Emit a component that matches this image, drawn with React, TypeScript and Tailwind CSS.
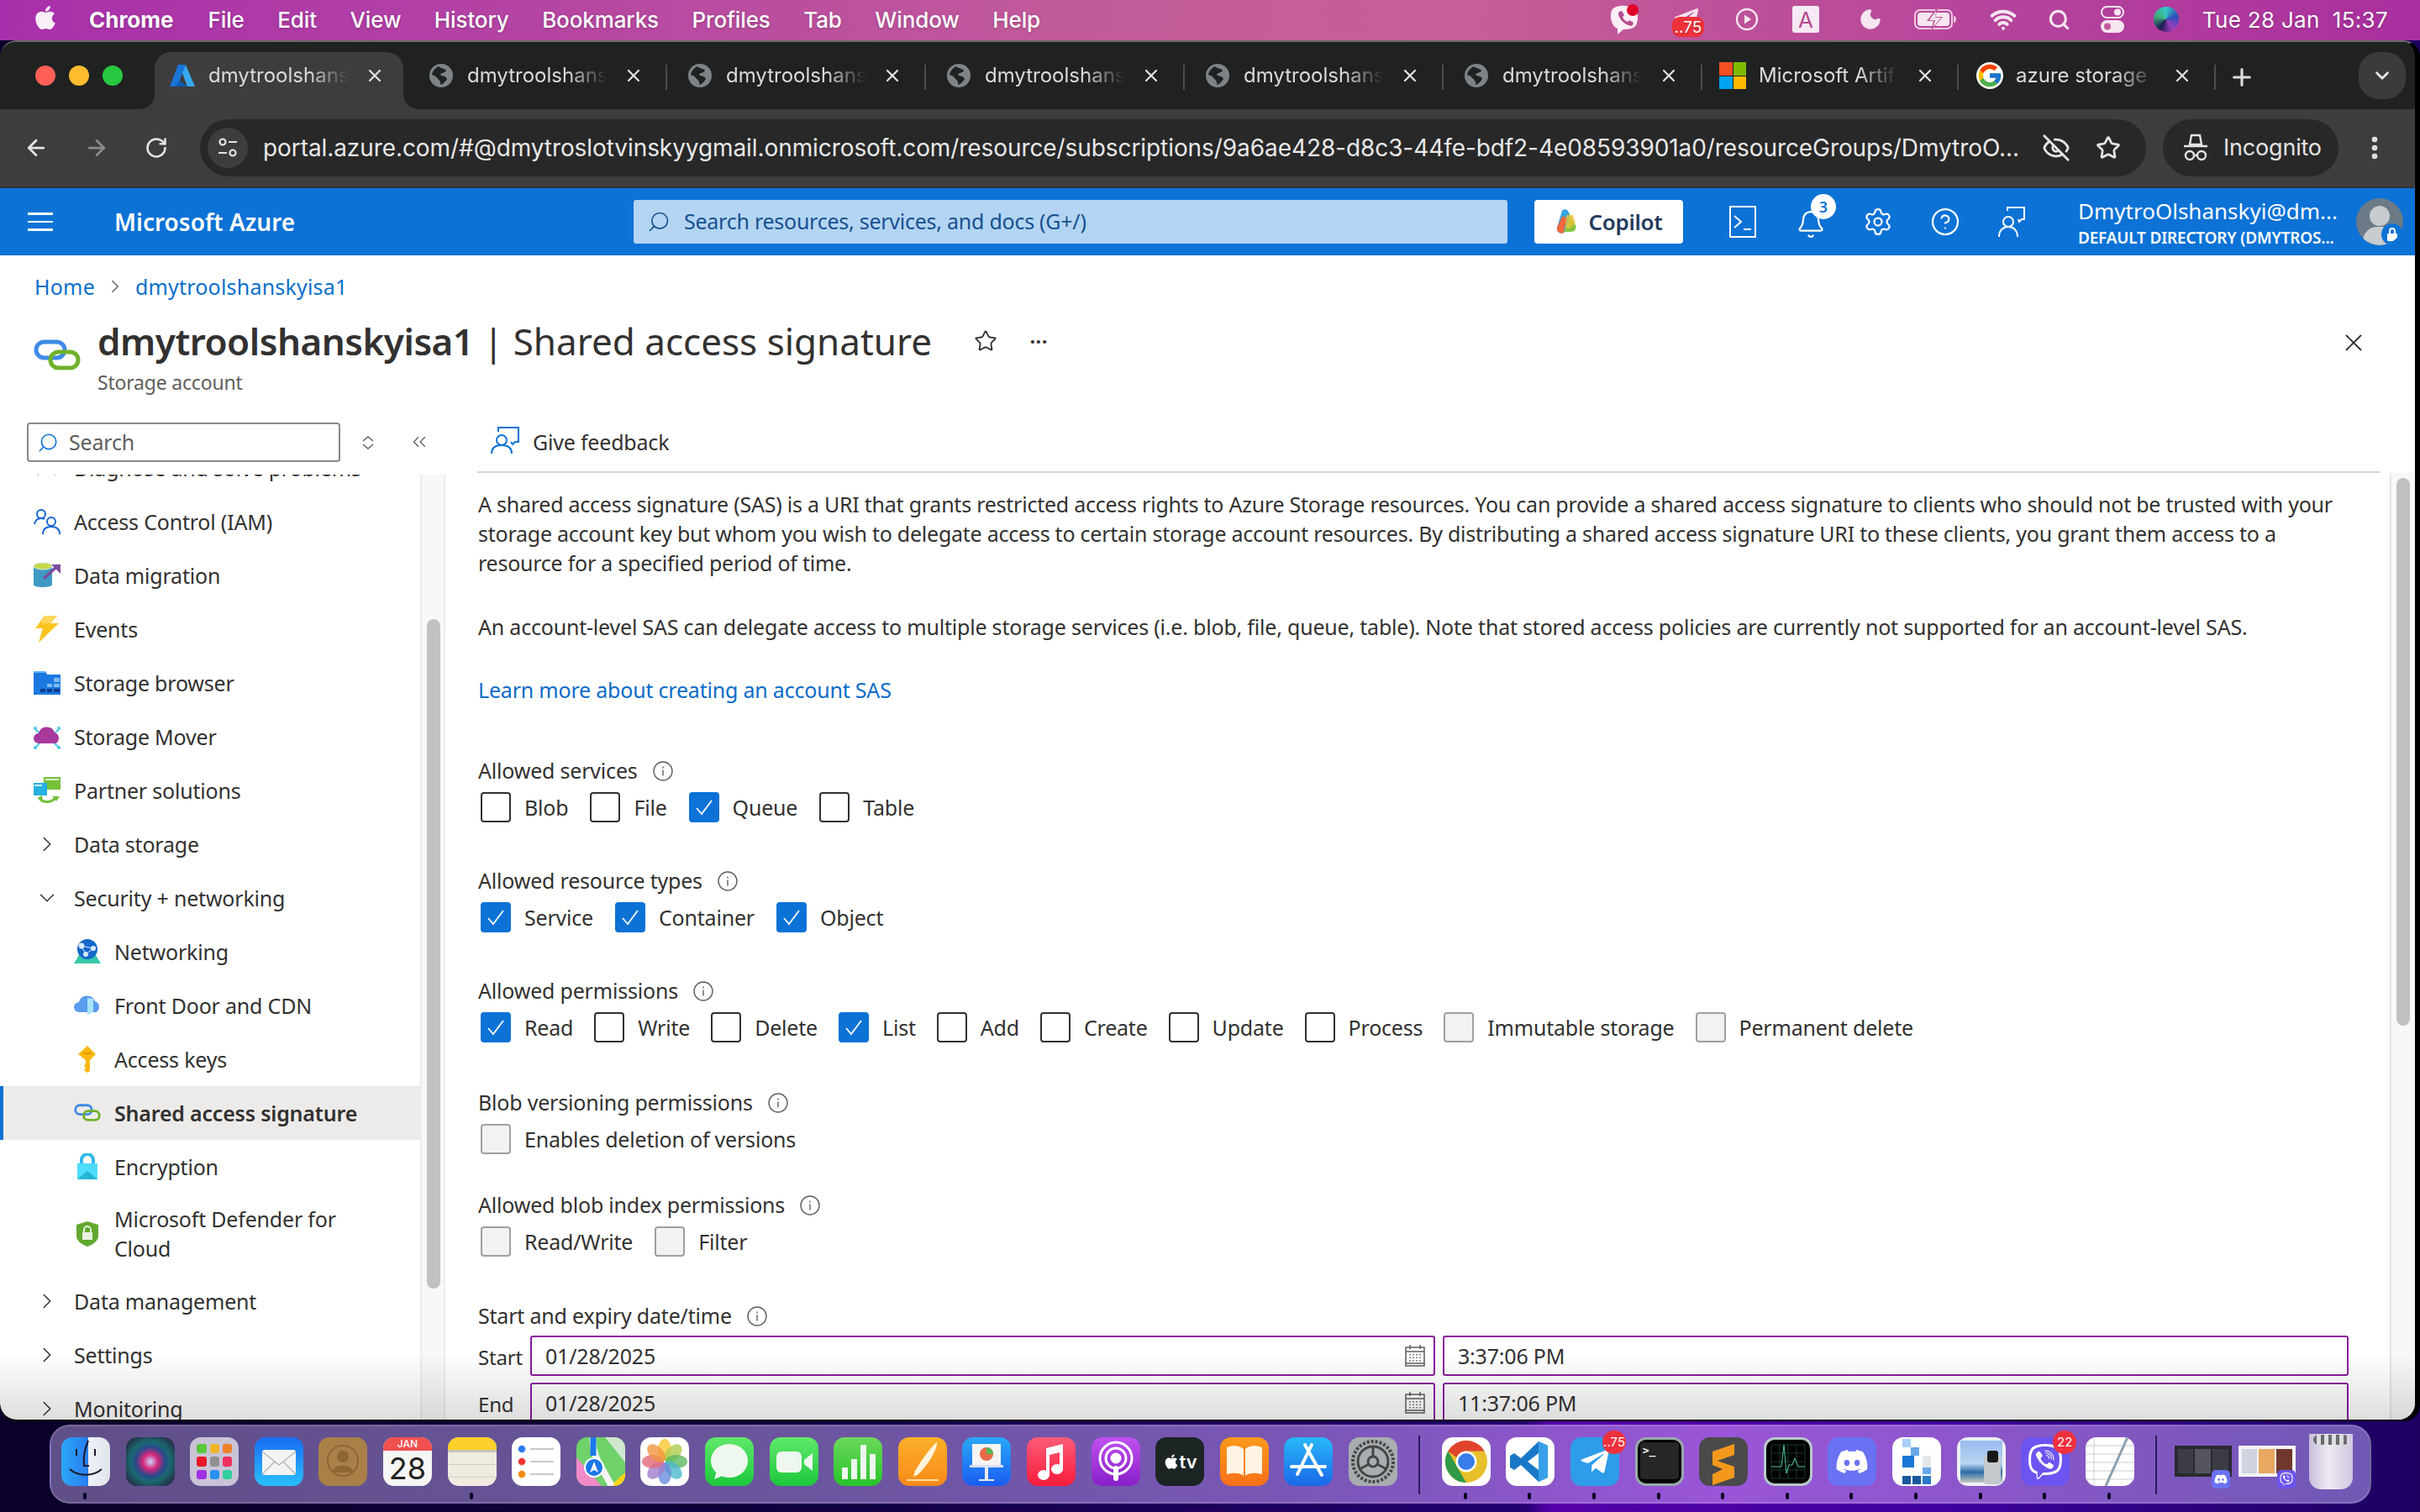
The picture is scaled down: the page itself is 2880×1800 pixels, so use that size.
import type { ReactNode } from 'react';
import {
  ArrowLeft,
  ArrowRight,
  Bell,
  ChevronDown,
  ChevronRight,
  ChevronsLeft,
  CircleHelp,
  EllipsisVertical,
  EyeOff,
  Moon,
  Plus,
  RotateCw,
  Search,
  Settings,
  Star,
  Wifi,
  X,
} from 'lucide-react';
import { FaApple, FaDiscord, FaTelegramPlane, FaViber } from 'react-icons/fa';
import { FcGoogle } from 'react-icons/fc';

function GlobeIcon() {
  return (
    <svg width="30" height="30" viewBox="0 0 30 30">
      <circle cx="15" cy="15" r="14" fill="#7f8388" />
      <path d="M12 4c3 3 7 2 9 5-1 3-6 2-7 5 2 2 7 1 8 5-2 3-4 6-8 7 1-3-1-6-4-8-1-3-4-3-6-4 1-5 4-8 8-10z" fill="#202222" />
    </svg>
  );
}

function AzureLogo() {
  return (
    <svg width="32" height="32" viewBox="0 0 32 32">
      <path d="M11 3h9L10 29H1z" fill="#1a75d8" />
      <path d="M20 3l11 26h-9l-6-16z" fill="#38a8f0" />
      <path d="M13 22l9 7H7z" fill="#0d5cb5" />
    </svg>
  );
}

function MsLogo() {
  return (
    <div className="grid h-[32px] w-[32px] grid-cols-2 gap-px">
      <div className="bg-[#f25022]" />
      <div className="bg-[#7fba00]" />
      <div className="bg-[#00a4ef]" />
      <div className="bg-[#ffb900]" />
    </div>
  );
}

function Tab({ icon, label, active, sep = true, className = '' }: { icon: ReactNode; label: string; active?: boolean; sep?: boolean; className?: string }) {
  return (
    <div className={`relative flex h-[68px] w-[308px] shrink-0 items-center pb-[12px] ${className}`}>
      {active && (
        <>
          <div className="absolute inset-y-0 left-[4px] right-[8px] rounded-t-[20px] bg-[#3d3d3d]" />
          <svg className="absolute bottom-0 left-[-14px]" width="18" height="18" viewBox="0 0 18 18">
            <path d="M18 0v18H0c10 0 18-8 18-18z" fill="#3d3d3d" />
          </svg>
          <svg className="absolute bottom-0 right-[-10px]" width="18" height="18" viewBox="0 0 18 18">
            <path d="M0 0v18h18C8 18 0 10 0 0z" fill="#3d3d3d" />
          </svg>
        </>
      )}
      <div className="relative ml-[20px] flex w-[34px] justify-center">{icon}</div>
      <span className="relative ml-[14px] w-[166px] whitespace-nowrap text-[24px] text-[#d9dadb] [mask-image:linear-gradient(to_right,black_72%,transparent_100%)]">
        {label}
      </span>
      <X className="relative ml-[20px] text-[#e3e3e3]" size={24} strokeWidth={2.2} />
      {sep && <div className="absolute right-[2px] top-[15px] h-[30px] w-[2px] bg-[#4b4d4d]" />}
    </div>
  );
}

function MenuBar() {
  const items = ['File', 'Edit', 'View', 'History', 'Bookmarks', 'Profiles', 'Tab', 'Window', 'Help'];
  return (
    <div className="flex h-[48px] shrink-0 items-center bg-[linear-gradient(90deg,#a82fab_0%,#c25b9a_45%,#c65f97_60%,#a92f9f_100%)] pb-[2px] text-[26px] font-medium text-white [text-shadow:0_1px_3px_rgba(0,0,0,0.25)]">
      <FaApple className="mb-[4px] ml-[38px] text-[#f8eef8]" size={32} />
      <span className="ml-[36px] font-bold">Chrome</span>
      <div className="ml-[41px] flex gap-[39.5px] tracking-[-0.12px]">
        {items.map((m) => (
          <span key={m}>{m}</span>
        ))}
      </div>
      <div className="ml-auto flex items-center">
        {/* viber */}
        <svg width="36" height="38" viewBox="0 0 36 38">
          <path d="M4 7c4-5 18-6 26-1 5 4 5 15 2 20-2 4-9 5-15 5l-7 6v-7c-8-3-10-17-6-23z" fill="#fbeef5" />
          <path d="M12 10l3-1 3 5-2 2c1 3 3 5 6 6l2-2 5 3-1 3c-1 1-3 1-5 0-6-2-11-8-12-13 0-1 0-2 1-3z" fill="#b44b8e" />
          <circle cx="28" cy="8" r="7" fill="#e0002a" />
        </svg>
        {/* telegram with badge */}
        <div className="relative ml-[40px] h-[34px] w-[36px]">
          <FaTelegramPlane className="text-[#f6e2ee]" size={32} />
          <div className="absolute bottom-[-4px] left-[-1px] flex h-[24px] w-[38px] items-center justify-center rounded-[9px] bg-[#ef3239] text-[19px] font-normal leading-none">..75</div>
        </div>
        <svg className="ml-[38px]" width="28" height="28" viewBox="0 0 28 28">
          <circle cx="14" cy="14" r="12" fill="none" stroke="#f6e6f0" strokeWidth="2.4" />
          <path d="M11 8.5l8 5.5-8 5.5z" fill="#f6e6f0" />
        </svg>
        <div className="ml-[40px] flex h-[32px] w-[32px] items-center justify-center rounded-[3px] bg-[#f7e9f3] text-[26px] font-normal text-[#b44b8e] [text-shadow:none]">A</div>
        <Moon className="ml-[47px] text-[#f6e6f0]" fill="#f6e6f0" size={28} />
        <svg className="ml-[38px]" width="52" height="28" viewBox="0 0 52 28">
          <rect x="1" y="3" width="44" height="22" rx="6" fill="none" stroke="#f0c9e0" strokeWidth="2" />
          <rect x="4" y="6" width="38" height="16" rx="3.5" fill="#f6e6f0" />
          <path d="M47 10v8c2 0 3-2 3-4s-1-4-3-4z" fill="#f0c9e0" />
          <path d="M27 0L15 16h8l-3 12 14-17h-9l4-11z" fill="#c25b9a" />
          <path d="M26 4L18 15h7l-2 8 9-11h-7l1-8z" fill="#f6e6f0" />
        </svg>
        <Wifi className="ml-[38px] text-[#f6e6f0]" size={32} strokeWidth={3} />
        <Search className="ml-[37px] text-[#f6e6f0]" size={27} strokeWidth={2.8} />
        <svg className="ml-[36px]" width="28" height="32" viewBox="0 0 28 32">
          <rect x="1" y="1" width="26" height="13" rx="6.5" fill="none" stroke="#f6e6f0" strokeWidth="2" />
          <circle cx="20" cy="7.5" r="4" fill="#f6e6f0" />
          <rect x="0" y="17" width="28" height="15" rx="7.5" fill="#f6e6f0" />
          <circle cx="8" cy="24.5" r="4" fill="#c25b9a" />
        </svg>
        <div className="ml-[35px] h-[30px] w-[30px] rounded-full bg-[conic-gradient(#37c8c8,#2b4fb8,#9a3fc0,#1d1d50,#3fae7a,#37c8c8)]" />
      </div>
      <span className="ml-[28px] mr-[38px] whitespace-pre font-normal tracking-[0.3px]">Tue 28 Jan  15:37</span>
    </div>
  );
}

function ChromeFrame() {
  const tab = () => <Tab icon={<GlobeIcon />} label="dmytroolshans" />;
  return (
    <>
      <div className="flex h-[80px] shrink-0 items-end bg-[#202222] pl-[42px] font-['Inter',sans-serif]">
        <div className="mb-[28px] mr-[34px] flex gap-[16px]">
          <div className="h-[24px] w-[24px] rounded-full bg-[#ff5f57]" />
          <div className="h-[24px] w-[24px] rounded-full bg-[#febc2e]" />
          <div className="h-[24px] w-[24px] rounded-full bg-[#28c840]" />
        </div>
        <Tab active sep={false} icon={<AzureLogo />} label="dmytroolshans" />
        {tab()}
        {tab()}
        {tab()}
        {tab()}
        {tab()}
        <Tab className="-ml-[3px]" icon={<MsLogo />} label="Microsoft Artif" />
        <Tab className="-ml-[2px]" icon={<FcGoogle className="rounded-full bg-white" size={32} />} label="azure storage" />
        <Plus className="mb-[22px] ml-[13px] text-[#dcdcdc]" size={32} strokeWidth={2.4} />
        <div className="mb-[12px] ml-[123px] flex h-[56px] w-[56px] items-center justify-center rounded-[24px] bg-[#3a3b3b]">
          <ChevronDown className="text-[#e3e3e3]" size={26} strokeWidth={2.6} />
        </div>
      </div>
      <div className="flex h-[94px] shrink-0 items-center border-b-2 border-[#333] bg-[#3d3d3d] font-['Inter',sans-serif] text-[#e3e3e3]">
        <ArrowLeft className="ml-[28px]" size={30} strokeWidth={2.2} />
        <ArrowRight className="ml-[42px] text-[#8c8c8c]" size={30} strokeWidth={2.2} />
        <RotateCw className="ml-[42px]" size={28} strokeWidth={2.2} />
        <div className="ml-[38px] flex h-[68px] w-[2316px] items-center rounded-[34px] bg-[#282828]">
          <div className="ml-[9px] flex h-[48px] w-[48px] items-center justify-center rounded-full bg-[#3d3d3d]">
            <svg width="26" height="26" viewBox="0 0 26 26" fill="none" stroke="#e3e3e3" strokeWidth="2.2">
              <circle cx="7" cy="6" r="3.5" />
              <path d="M14 6h10M2 19h10" />
              <circle cx="19" cy="19" r="3.5" />
            </svg>
          </div>
          <span className="ml-[18px] whitespace-nowrap text-[28px] tracking-[-0.08px] text-[#e9e9e9]">portal.azure.com/#@dmytroslotvinskyygmail.onmicrosoft.com/resource/subscriptions/9a6ae428-d8c3-44fe-bdf2-4e08593901a0/resourceGroups/DmytroO...</span>
          <EyeOff className="ml-auto" size={34} strokeWidth={2} />
          <Star className="ml-[30px] mr-[30px]" size={30} strokeWidth={2.2} />
        </div>
        <div className="ml-[20px] flex h-[68px] w-[209px] items-center rounded-[34px] bg-[#282828]">
          <svg className="ml-[24px]" width="30" height="34" viewBox="0 0 30 34" fill="none" stroke="#e3e3e3" strokeWidth="2.4">
            <path d="M10 2h10l2 11H8zM1 15h28" />
            <circle cx="8" cy="26" r="5" />
            <circle cx="22" cy="26" r="5" />
            <path d="M13 26h4" />
          </svg>
          <span className="ml-[18px] text-[27px] tracking-[-0.2px]">Incognito</span>
        </div>
        <EllipsisVertical className="ml-[26px]" size={34} strokeWidth={2.6} />
      </div>
    </>
  );
}

function AzureHeader() {
  return (
    <div className="flex h-[80px] shrink-0 items-center bg-[#0c72d6] font-['Noto_Sans',sans-serif] text-white">
      <div className="ml-[33px] flex w-[30px] flex-col gap-[7px]">
        <div className="h-[2.5px] bg-white" />
        <div className="h-[2.5px] bg-white" />
        <div className="h-[2.5px] bg-white" />
      </div>
      <span className="ml-[73px] w-[618px] text-[28px] font-semibold">Microsoft Azure</span>
      <div className="flex h-[52px] w-[1040px] items-center rounded-[3px] bg-[#b3d5f3] pl-[16px] text-[25px] tracking-[-0.25px] text-[#17508f]">
        <Search className="scale-x-[-1]" size={28} strokeWidth={1.4} />
        <span className="ml-[16px]">Search resources, services, and docs (G+/)</span>
      </div>
      <div className="ml-[32px] flex h-[52px] w-[177px] items-center justify-center gap-[12px] rounded-[4px] bg-white text-[26px] font-semibold tracking-[-0.3px] text-[#243a5e]">
        <svg width="28" height="32" viewBox="0 0 28 32">
          <path d="M9 3c2-3 7-2 8 2l5 15-11 9c-4 2-9-1-8-6z" fill="#37a5e8" />
          <path d="M3 23l6-13c3-1 5 0 6 3l-3 9-1 7c-4 2-9-1-8-6z" fill="#f2683c" />
          <path d="M17 5l8 15c2 4-1 8-5 8h-9l6-13z" fill="#86c440" />
          <path d="M14 8h8l3 9-7 7h-5z" fill="#f0c436" opacity=".75" />
        </svg>
        Copilot
      </div>
      <svg className="ml-[54px]" width="34" height="38" viewBox="0 0 34 38" fill="none" stroke="#fff" strokeWidth="2">
        <rect x="2" y="1" width="30" height="36" />
        <path d="M7 12l8 7-8 7M18 28h9" />
      </svg>
      <div className="relative ml-[46px]">
        <Bell size={36} strokeWidth={1.5} className="mt-[6px]" />
        <div className="absolute right-[-12px] top-[-12px] flex h-[30px] w-[30px] items-center justify-center rounded-full bg-white text-[18px] font-semibold text-[#0c72d6]">3</div>
      </div>
      <Settings className="ml-[44px]" size={36} strokeWidth={1.5} />
      <CircleHelp className="ml-[44px]" size={36} strokeWidth={1.5} />
      <svg className="ml-[44px]" width="34" height="38" viewBox="0 0 34 38" fill="none" stroke="#fff" strokeWidth="2">
        <path d="M12 6V2h20v14h-3l-3 3-1-3" />
        <circle cx="13" cy="19" r="6" />
        <path d="M2 37c0-8 5-12 11-12s11 4 11 12" />
      </svg>
      <div className="ml-[62px] flex w-[320px] flex-col">
        <span className="mt-[1px] whitespace-nowrap text-[26px] leading-[34px]">DmytroOlshanskyi@dm...</span>
        <span className="mt-[2px] whitespace-nowrap text-[19px] font-semibold leading-[26px] tracking-[-0.2px]">DEFAULT DIRECTORY (DMYTROS...</span>
      </div>
      <div className="relative ml-[11px] h-[56px] w-[56px] overflow-hidden rounded-full bg-[#6b7a86]">
        <div className="absolute left-[16px] top-[9px] h-[24px] w-[24px] rounded-full bg-[#c8ccd0]" />
        <div className="absolute left-[8px] top-[34px] h-[34px] w-[40px] rounded-full bg-[#c8ccd0]" />
        <div className="absolute bottom-[0px] right-[0px] flex h-[26px] w-[26px] items-center justify-center rounded-full bg-[#0c72d6]">
          <svg width="14" height="16" viewBox="0 0 14 16">
            <path d="M4 7V4a3 3 0 016 0v3" fill="none" stroke="#fff" strokeWidth="2" />
            <rect x="1" y="7" width="12" height="9" rx="1" fill="#fff" />
          </svg>
        </div>
      </div>
    </div>
  );
}

function ChainIcon({ w = 32 }: { w?: number }) {
  return (
    <svg width={w} height={(w * 37) / 56} viewBox="0 0 56 37" fill="none" strokeWidth="5">
      <rect x="3" y="3" width="34" height="19" rx="9.5" stroke="#3f8ae6" />
      <rect x="20" y="15" width="33" height="19" rx="9.5" stroke="#6fb12a" />
    </svg>
  );
}

const sideIcons: Record<string, ReactNode> = {
  diagnose: (
    <svg width="32" height="32" viewBox="0 0 32 32">
      <path d="M2 20l9-7 3 4-9 8z" fill="#1c6fb8" />
      <path d="M18 13l12 7-4 5-9-7z" fill="#4aa8c8" />
    </svg>
  ),
  iam: (
    <svg width="32" height="32" viewBox="0 0 32 32" fill="none" stroke="#1467d8" strokeWidth="2">
      <circle cx="9" cy="7" r="5" />
      <path d="M1 19c1-5 4-7 8-7 2 0 3 .5 4 1" />
      <circle cx="21" cy="16" r="5" />
      <path d="M11 31c0-6 4-9 10-9s10 3 10 9" />
    </svg>
  ),
  migration: (
    <svg width="32" height="32" viewBox="0 0 32 32">
      <path d="M0 5h22v22c0 2-5 3-11 3S0 29 0 27z" fill="#3f9ac2" />
      <ellipse cx="11" cy="5" rx="11" ry="4" fill="#c8d84a" stroke="#d8e8e8" />
      <path d="M12 20L27 6" stroke="#7a4b9e" strokeWidth="3.5" />
      <path d="M21 3h11v11z" fill="#7a4b9e" />
    </svg>
  ),
  events: (
    <svg width="32" height="32" viewBox="0 0 32 32">
      <path d="M13 0h15l-8 9h10L6 32l5-17H2z" fill="#fcc41e" />
      <path d="M13 0h15l-8 9H9z" fill="#fdd85a" />
    </svg>
  ),
  browser: (
    <svg width="32" height="32" viewBox="0 0 32 32">
      <path d="M0 2h14l2 4h16v24H0z" fill="#1a78e0" />
      <path d="M0 2h14l1 2H0z" fill="#60b0f8" />
      <g fill="#0b3c8c">
        <rect x="8" y="23" width="6" height="4" />
        <rect x="16" y="23" width="6" height="4" />
        <rect x="24" y="23" width="7" height="4" />
      </g>
      <g fill="#7fb8f0">
        <rect x="16" y="17" width="6" height="4" />
        <rect x="24" y="17" width="7" height="4" />
        <rect x="24" y="10" width="7" height="5" />
      </g>
    </svg>
  ),
  mover: (
    <svg width="32" height="32" viewBox="0 0 32 32">
      <path d="M2 7l6 6M30 7l-6 6M2 29l6-6M30 29l-6-6" stroke="#4cc8e8" strokeWidth="2" />
      <path d="M6 24a6 6 0 010-12 10 10 0 0119-1 7 7 0 011 13z" fill="#a8389c" />
      <circle cx="2" cy="6" r="2" fill="#4cc8e8" />
      <circle cx="30" cy="6" r="2" fill="#4cc8e8" />
      <circle cx="2" cy="29" r="2" fill="#4cc8e8" />
      <circle cx="30" cy="29" r="2" fill="#4cc8e8" />
    </svg>
  ),
  partner: (
    <svg width="32" height="32" viewBox="0 0 32 32">
      <rect x="12" y="0" width="20" height="15" fill="#76c03a" />
      <rect x="14" y="2" width="16" height="2" fill="#dff0c8" />
      <rect x="0" y="7" width="16" height="15" fill="#28b0e0" />
      <rect x="1" y="9" width="9" height="2" fill="#c8f0ff" />
      <path d="M7 25c3 6 14 6 19 0" fill="none" stroke="#76c03a" strokeWidth="3" />
      <path d="M22 23h9l-4 6zM4 25l6-3 1 6z" fill="#76c03a" />
    </svg>
  ),
  networking: (
    <svg width="32" height="32" viewBox="0 0 32 32">
      <path d="M0 30l6-10h20l6 10z" fill="#36c8a8" />
      <circle cx="16" cy="13" r="12" fill="#1468c8" />
      <circle cx="9" cy="9" r="3.4" fill="#d8eaff" />
      <circle cx="23" cy="12" r="3" fill="#d8eaff" />
      <circle cx="14" cy="19" r="3" fill="#d8eaff" />
      <path d="M9 9l14 3-9 7z" fill="none" stroke="#d8eaff" />
    </svg>
  ),
  frontdoor: (
    <svg width="32" height="32" viewBox="0 0 32 32">
      <path d="M6 24a6 6 0 010-12 10 10 0 0119-1 7 7 0 011 13z" fill="#5a9cf0" />
      <path d="M17 7l-1 1v20l7-5V8z" fill="#a8e4f8" />
    </svg>
  ),
  key: (
    <svg width="32" height="32" viewBox="0 0 32 32">
      <path d="M16 0l10 10-7 7v13l-3 2-4-3 2-3-2-2 2-3v-4L5 10z" fill="#fbb80f" />
      <rect x="11" y="8" width="10" height="2" fill="#e89a00" />
    </svg>
  ),
  encryption: (
    <svg width="32" height="32" viewBox="0 0 32 32">
      <path d="M9 14V8a7 7 0 0114 0v6" fill="none" stroke="#32b8ea" strokeWidth="4" />
      <rect x="4" y="12" width="24" height="19" fill="#4fdcfb" />
      <path d="M4 31l12-10 12 10z" fill="#24b4d8" />
    </svg>
  ),
  defender: (
    <svg width="28" height="32" viewBox="0 0 28 32">
      <path d="M14 1l13 4v14c0 5-7 10-13 12C8 29 1 24 1 19V5z" fill="#62a82e" />
      <path d="M10 14v-3a4 4 0 018 0v3" fill="none" stroke="#e8f0e0" strokeWidth="2" />
      <rect x="8" y="14" width="12" height="9" fill="#e8f0e0" />
    </svg>
  ),
};

function SideRow({ icon, label, sub, open, chev, active, wrap, className = '' }: { icon?: ReactNode; label: string; sub?: boolean; open?: boolean; chev?: boolean; active?: boolean; wrap?: boolean; className?: string }) {
  return (
    <div className={`flex min-h-[64px] items-center ${sub ? 'pl-[88px]' : 'pl-[40px]'} ${active ? 'border-l-4 border-[#0c72d6] !pl-[84px] bg-[#edebe9] font-semibold' : ''} ${className}`}>
      <div className="flex w-[32px] shrink-0 justify-center">
        {chev && (open ? <ChevronDown size={30} strokeWidth={1.2} /> : <ChevronRight size={30} strokeWidth={1.2} />)}
        {icon}
      </div>
      <span className={`ml-[16px] leading-[35px] ${wrap ? 'max-w-[300px]' : 'whitespace-nowrap'}`}>{label}</span>
    </div>
  );
}

function Sidebar() {
  return (
    <div className="flex w-[530px] shrink-0 flex-col">
      <div className="flex h-[64px] shrink-0 items-start pl-[32px] pt-[2px]">
        <div className="flex h-[47px] w-[373px] items-center rounded-[4px] border-2 border-[#8a8886] pl-[10px] text-[#605e5c]">
          <Search className="scale-x-[-1] text-[#0c72d6]" size={26} strokeWidth={1.5} />
          <span className="ml-[12px]">Search</span>
        </div>
        <svg className="ml-[25px] mt-[15px]" width="16" height="18" viewBox="0 0 16 18" fill="none" stroke="#605e5c" strokeWidth="1.4">
          <path d="M2 7l6-5 6 5M2 11l6 5 6-5" />
        </svg>
        <ChevronsLeft className="ml-[40px] mt-[10px] text-[#605e5c]" size={26} strokeWidth={1.2} />
      </div>
      <div className="flex min-h-0 flex-1">
        <div className="w-[500px] shrink-0 overflow-hidden">
          <SideRow className="-mt-[40px]" icon={sideIcons.diagnose} label="Diagnose and solve problems" />
          <SideRow icon={sideIcons.iam} label="Access Control (IAM)" />
          <SideRow icon={sideIcons.migration} label="Data migration" />
          <SideRow icon={sideIcons.events} label="Events" />
          <SideRow icon={sideIcons.browser} label="Storage browser" />
          <SideRow icon={sideIcons.mover} label="Storage Mover" />
          <SideRow icon={sideIcons.partner} label="Partner solutions" />
          <SideRow chev label="Data storage" />
          <SideRow chev open label="Security + networking" />
          <SideRow sub icon={sideIcons.networking} label="Networking" />
          <SideRow sub icon={sideIcons.frontdoor} label="Front Door and CDN" />
          <SideRow sub icon={sideIcons.key} label="Access keys" />
          <SideRow sub active icon={<ChainIcon />} label="Shared access signature" />
          <SideRow sub icon={sideIcons.encryption} label="Encryption" />
          <SideRow sub wrap className="py-[13px]" icon={sideIcons.defender} label="Microsoft Defender for Cloud" />
          <SideRow chev label="Data management" />
          <SideRow chev label="Settings" />
          <SideRow chev label="Monitoring" />
        </div>
        <div className="w-[30px] border-x-2 border-[#ececec] bg-[#f8f8f8] pl-[6px] pt-[172px]">
          <div className="h-[797px] w-[16px] rounded-full bg-[#c1c1c1]" />
        </div>
      </div>
    </div>
  );
}

function Info() {
  return (
    <svg className="ml-[18px]" width="24" height="24" viewBox="0 0 24 24" fill="none" stroke="#605e5c" strokeWidth="1.4">
      <circle cx="12" cy="12" r="11" />
      <path d="M12 10.5v7M12 6.5v2" />
    </svg>
  );
}

function Check({ label, on, off, tight }: { label: string; on?: boolean; off?: boolean; tight?: boolean }) {
  return (
    <div className={`${tight ? 'mr-[25px]' : 'mr-[26px]'} flex items-center`}>
      <div className={`flex h-[36px] w-[36px] items-center justify-center rounded-[4px] border-2 ${on ? 'border-[#0c72d6] bg-[#0c72d6]' : off ? 'border-[#a19f9d] bg-[#f3f2f1]' : 'border-[#323130] bg-white'}`}>
        {on && (
          <svg width="24" height="24" viewBox="0 0 24 24" fill="none" stroke="#fff" strokeWidth="1.8">
            <path d="M3 13l6 7L21 4" />
          </svg>
        )}
      </div>
      <span className="ml-[16px] leading-[35px]">{label}</span>
    </div>
  );
}

function Field({ label, className = '', children }: { label: string; className?: string; children: ReactNode }) {
  return (
    <div className={className}>
      <div className="flex h-[35px] items-center">
        {label}
        <Info />
      </div>
      {children}
    </div>
  );
}

function Calendar() {
  return (
    <svg className="ml-auto mr-[10px]" width="24" height="26" viewBox="0 0 24 26" fill="none" stroke="#605e5c" strokeWidth="1.5">
      <rect x="1" y="3" width="22" height="22" />
      <path d="M1 8h22M1 22h22M6 0v5M18 0v5" />
      <path d="M6 11v9M10 11v9M14 11v9M18 11v9" strokeDasharray="1.5 2" />
    </svg>
  );
}

function DateRow({ label, date, time, mt }: { label: string; date: string; time: string; mt: string }) {
  return (
    <div className={`flex h-[48px] items-center ${mt}`}>
      <span className="w-[62px] pt-[2px] text-[24px]">{label}</span>
      <div className="flex h-[48px] w-[1077px] items-center rounded-[3px] border-2 border-[#8a1aa0] bg-white/40 pl-[16px]">
        {date}
        <Calendar />
      </div>
      <div className="ml-[9px] flex h-[48px] w-[1078px] items-center rounded-[3px] border-2 border-[#8a1aa0] bg-white/40 pl-[16px]">{time}</div>
    </div>
  );
}

function MainPane() {
  return (
    <div className="ml-[38px] flex min-w-0 flex-1 flex-col">
      <div className="mr-[41px] flex h-[62px] shrink-0 items-start border-b-2 border-[#d6d6d6] pl-[16px] pt-[6px]">
        <svg width="34" height="34" viewBox="0 0 34 34" fill="none" stroke="#0c72d6" strokeWidth="2">
          <path d="M9 7V2h24v17h-4l-3 3-2-3" />
          <circle cx="13" cy="17" r="6" />
          <path d="M1 33c0-7 5-10 12-10s12 3 12 10" />
        </svg>
        <span className="ml-[16px] mt-[2px]">Give feedback</span>
      </div>
      <div className="flex min-h-0 flex-1">
        <div className="min-w-0 flex-1 overflow-hidden pl-[1px] pt-[20px]">
          <p className="w-[2240px] tracking-[-0.24px]">A shared access signature (SAS) is a URI that grants restricted access rights to Azure Storage resources. You can provide a shared access signature to clients who should not be trusted with your storage account key but whom you wish to delegate access to certain storage account resources. By distributing a shared access signature URI to these clients, you grant them access to a resource for a specified period of time.</p>
          <p className="mt-[41px]">An account-level SAS can delegate access to multiple storage services (i.e. blob, file, queue, table). Note that stored access policies are currently not supported for an account-level SAS.</p>
          <p className="mt-[40px] text-[#0b6cc8]">Learn more about creating an account SAS</p>
          <Field className="mt-[61px]" label="Allowed services">
            <div className="mt-[8px] flex pl-[3px]">
              <Check label="Blob" />
              <Check label="File" />
              <Check label="Queue" on />
              <Check label="Table" />
            </div>
          </Field>
          <Field className="mt-[52px]" label="Allowed resource types">
            <div className="mt-[8px] flex pl-[3px]">
              <Check label="Service" on />
              <Check label="Container" on />
              <Check label="Object" on />
            </div>
          </Field>
          <Field className="mt-[52px]" label="Allowed permissions">
            <div className="mt-[8px] flex pl-[3px]">
              <Check tight label="Read" on />
              <Check tight label="Write" />
              <Check tight label="Delete" />
              <Check tight label="List" on />
              <Check tight label="Add" />
              <Check tight label="Create" />
              <Check tight label="Update" />
              <Check tight label="Process" />
              <Check tight label="Immutable storage" off />
              <Check tight label="Permanent delete" off />
            </div>
          </Field>
          <Field className="mt-[54px]" label="Blob versioning permissions">
            <div className="mt-[8px] flex pl-[3px]">
              <Check label="Enables deletion of versions" off />
            </div>
          </Field>
          <Field className="mt-[43px]" label="Allowed blob index permissions">
            <div className="mt-[8px] flex pl-[3px]">
              <Check label="Read/Write" off />
              <Check label="Filter" off />
            </div>
          </Field>
          <Field className="mt-[53px]" label="Start and expiry date/time">
            <DateRow mt="mt-[6px]" label="Start" date="01/28/2025" time="3:37:06 PM" />
            <DateRow mt="mt-[8px]" label="End" date="01/28/2025" time="11:37:06 PM" />
          </Field>
        </div>
        <div className="w-[30px] shrink-0 border-l-2 border-[#e6e6e6] bg-[#f8f8f8] pl-[6px] pt-[6px]">
          <div className="h-[652px] w-[16px] rounded-full bg-[#c1c1c1]" />
        </div>
      </div>
    </div>
  );
}

function Portal() {
  return (
    <div className="relative flex min-h-0 flex-1 flex-col overflow-hidden rounded-b-[20px] bg-white font-['Noto_Sans',sans-serif] text-[25px] leading-[35px] tracking-[-0.2px] text-[#323130]">
      <div className="pl-[41px] pt-[20px] text-[#0c6fcb]">
        <div className="flex h-[34px] items-center tracking-[0.2px]">
          Home
          <ChevronRight className="mx-[11px] text-[#605e5c]" size={26} strokeWidth={1.2} />
          dmytroolshanskyisa1
        </div>
      </div>
      <div className="relative flex h-[143px] shrink-0 pl-[40px] pt-[19px]">
        <div className="mt-[27px]">
          <ChainIcon w={56} />
        </div>
        <div className="ml-[20px] flex flex-col">
          <div className="flex items-center">
            <span className="text-[44px] leading-[58px] tracking-normal">
              <span className="font-semibold tracking-[-0.5px]">dmytroolshanskyisa1</span> | Shared access signature
            </span>
            <Star className="ml-[50px] mr-[38px]" size={28} strokeWidth={1.6} />
            <span className="text-[26px] font-semibold leading-none tracking-normal">···</span>
          </div>
          <span className="mt-[4px] text-[23px] leading-[32px] text-[#605e5c]">Storage account</span>
        </div>
        <X className="absolute right-[56px] top-[33px]" size={34} strokeWidth={1.3} />
      </div>
      <div className="flex min-h-0 flex-1">
        <Sidebar />
        <MainPane />
      </div>
      {/* shade cast by the dock */}
      <div className="pointer-events-none absolute inset-x-0 bottom-0 h-[80px] bg-[linear-gradient(180deg,rgba(0,0,0,0)_0%,rgba(0,0,0,0.13)_100%)]" />
    </div>
  );
}

function Squircle({ className = '', children }: { className?: string; children?: ReactNode }) {
  return <div className={`relative h-[58px] w-[58px] shrink-0 overflow-hidden rounded-[13px] ${className}`}>{children}</div>;
}

const leftDock: ReactNode[] = [
  <Squircle key="finder" className="bg-[linear-gradient(90deg,#2aa8f6_0%,#2a7cf0_55%,#eef2f6_55%,#dfe5ec_100%)]">
    <svg width="58" height="58" viewBox="0 0 58 58" fill="none" stroke="#1a1a2a" strokeWidth="2">
      <path d="M18 14v8M40 14v8M32 4c-5 12-6 22-5 30h6M10 38c10 9 28 9 38 0" />
    </svg>
  </Squircle>,
  <Squircle key="siri" className="bg-[radial-gradient(circle,#c8d8ff_0%,#d8267a_22%,#2a4a8c_42%,#1a6a70_58%,#2a1030_100%)]" />,
  <Squircle key="launchpad" className="grid grid-cols-3 gap-[4px] bg-[#c8c4d6] p-[8px]">
    {['bg-[#58c838]', 'bg-[#f0b428]', 'bg-[#f08028]', 'bg-[#e81828]', 'bg-[#909090]', 'bg-[#f03060]', 'bg-[#a030e0]', 'bg-[#2890f0]', 'bg-[#30d0a0]'].map((c) => (
      <div key={c} className={`rounded-[3px] ${c}`} />
    ))}
  </Squircle>,
  <Squircle key="mail" className="bg-[linear-gradient(180deg,#1a6cf4_0%,#28c0fc_100%)]">
    <svg width="58" height="58" viewBox="0 0 58 58">
      <rect x="9" y="15" width="40" height="30" rx="3" fill="#f4f4f4" />
      <path d="M9 17l20 16 20-16M9 44l15-15M49 44L34 29" fill="none" stroke="#b8b8b8" strokeWidth="1.5" />
    </svg>
  </Squircle>,
  <Squircle key="contacts" className="bg-[#a98048]">
    <svg width="58" height="58" viewBox="0 0 58 58" fill="none" stroke="#8c6634" strokeWidth="2">
      <circle cx="29" cy="28" r="18" />
      <circle cx="29" cy="23" r="6" fill="#8c6634" />
      <path d="M17 42c2-10 22-10 24 0" fill="#8c6634" />
    </svg>
  </Squircle>,
  <Squircle key="calendar" className="flex flex-col items-center bg-[#f6f6f4] text-[#222]">
    <div className="flex h-[16px] w-full items-center justify-center bg-[#f05050] text-[12px] font-medium leading-none text-white">JAN</div>
    <span className="mt-[1px] text-[36px] font-normal leading-[40px]">28</span>
  </Squircle>,
  <Squircle key="notes" className="flex flex-col bg-[#efebe0]">
    <div className="h-[15px] bg-[#fdd02c]" />
    <div className="h-[3px] bg-[#c9c5b8]" />
    <div className="mt-[14px] h-px bg-[#d2cfc4]" />
    <div className="mt-[14px] h-px bg-[#d2cfc4]" />
  </Squircle>,
  <Squircle key="reminders" className="bg-white">
    <svg width="58" height="58" viewBox="0 0 58 58" fill="none">
      <circle cx="12" cy="14" r="4.5" fill="#2a78f0" stroke="#cfe0ff" />
      <circle cx="12" cy="29" r="4.5" fill="#f03030" stroke="#ffd0d0" />
      <circle cx="12" cy="44" r="4.5" fill="#f08a10" stroke="#ffe0b0" />
      <path d="M22 14h28M22 29h28M22 44h28" stroke="#b8b8b8" strokeWidth="1.5" />
    </svg>
  </Squircle>,
  <Squircle key="maps" className="bg-[#6fd26a]">
    <svg width="58" height="58" viewBox="0 0 58 58">
      <path d="M0 24l30 34H0z" fill="#f28ac8" />
      <path d="M34 0h24v30z" fill="#cfe8d0" />
      <path d="M40 58l18-16v16z" fill="#ffd21a" />
      <path d="M20 0c-2 14 4 28 12 40l10 18" fill="none" stroke="#f4f4f4" strokeWidth="8" />
      <path d="M20 0v22" stroke="#1a78e8" strokeWidth="7" />
      <circle cx="21" cy="36" r="11" fill="#1a78e8" stroke="#fff" strokeWidth="2" />
      <path d="M21 29l5 13-5-3-5 3z" fill="#fff" />
    </svg>
  </Squircle>,
  <Squircle key="photos" className="bg-white">
    <svg width="58" height="58" viewBox="0 0 58 58" opacity=".9">
      {['#f8c21c', '#a8c83c', '#4cb050', '#38b0c8', '#5a80d8', '#9a70c8', '#e05a6a', '#f08a2a'].map((c, i) => (
        <ellipse key={c} cx="29" cy="15" rx="8" ry="13" fill={c} opacity=".8" transform={`rotate(${i * 45} 29 29)`} />
      ))}
    </svg>
  </Squircle>,
  <Squircle key="messages" className="bg-[linear-gradient(180deg,#60e86a_0%,#1cc83c_100%)]">
    <svg width="58" height="58" viewBox="0 0 58 58">
      <ellipse cx="29" cy="28" rx="22" ry="20" fill="#eef8ee" />
      <path d="M14 40l-3 10 12-5z" fill="#eef8ee" />
    </svg>
  </Squircle>,
  <Squircle key="facetime" className="bg-[linear-gradient(180deg,#60e86a_0%,#1cc83c_100%)]">
    <svg width="58" height="58" viewBox="0 0 58 58" fill="#eef8ee">
      <rect x="8" y="17" width="30" height="25" rx="6" />
      <path d="M41 27l10-8v21l-10-8z" />
    </svg>
  </Squircle>,
  <Squircle key="numbers" className="bg-[linear-gradient(180deg,#6cd85a_0%,#28c42a_100%)]">
    <svg width="58" height="58" viewBox="0 0 58 58" fill="#eef8ee">
      <rect x="10" y="36" width="7" height="14" />
      <rect x="21" y="26" width="7" height="24" />
      <rect x="32" y="9" width="7" height="41" />
      <rect x="43" y="20" width="7" height="30" />
    </svg>
  </Squircle>,
  <Squircle key="pages" className="bg-[linear-gradient(180deg,#fcb02a_0%,#f88a18_100%)]">
    <svg width="58" height="58" viewBox="0 0 58 58">
      <path d="M46 6c1 6-8 24-22 38l-6 3 2-7C30 24 40 10 46 6z" fill="#fff3dc" />
      <rect x="10" y="50" width="38" height="2" fill="#ffdca0" />
    </svg>
  </Squircle>,
  <Squircle key="keynote" className="bg-[linear-gradient(180deg,#28a8f8_0%,#1a5cf0_100%)]">
    <svg width="58" height="58" viewBox="0 0 58 58">
      <rect x="12" y="8" width="34" height="25" fill="#f4f4f4" />
      <circle cx="29" cy="20" r="8" fill="#e86a4a" />
      <path d="M29 20V12a8 8 0 018 8z" fill="#50b850" />
      <rect x="9" y="33" width="40" height="3" fill="#dde" />
      <rect x="27" y="36" width="4" height="14" fill="#e8e8f0" />
      <rect x="20" y="50" width="18" height="2" fill="#e8e8f0" />
    </svg>
  </Squircle>,
  <Squircle key="music" className="bg-[linear-gradient(180deg,#fc5c78_0%,#f81c3c_100%)]">
    <svg width="58" height="58" viewBox="0 0 58 58" fill="#fff">
      <path d="M23 13l20-5v30h-4V18l-12 3v24h-4z" />
      <ellipse cx="20" cy="45" rx="7" ry="6" />
      <ellipse cx="36" cy="38" rx="7" ry="6" />
    </svg>
  </Squircle>,
  <Squircle key="podcasts" className="bg-[linear-gradient(180deg,#c050f0_0%,#8820c8_100%)]">
    <svg width="58" height="58" viewBox="0 0 58 58" fill="none" stroke="#fff" strokeWidth="3">
      <circle cx="29" cy="25" r="19" />
      <circle cx="29" cy="25" r="12" />
      <circle cx="29" cy="25" r="5" fill="#fff" />
      <rect x="26" y="34" width="6" height="18" rx="3" fill="#fff" stroke="none" />
    </svg>
  </Squircle>,
  <Squircle key="tv" className="flex items-center justify-center bg-[#1c2424] font-['Inter',sans-serif] text-[22px] font-semibold text-white">
    <FaApple size={20} />
    tv
  </Squircle>,
  <Squircle key="books" className="bg-[linear-gradient(180deg,#fc9a1a_0%,#f8701a_100%)]">
    <svg width="58" height="58" viewBox="0 0 58 58" fill="#fff4e4">
      <path d="M8 12c8-3 16-2 20 2v32c-4-4-12-4-20-2zM50 12c-8-3-16-2-20 2v32c4-4 12-4 20-2z" />
    </svg>
  </Squircle>,
  <Squircle key="appstore" className="bg-[linear-gradient(180deg,#28b8f8_0%,#1a68e8_100%)]">
    <svg width="58" height="58" viewBox="0 0 58 58" fill="none" stroke="#fff" strokeWidth="4" strokeLinecap="round">
      <path d="M33 9L16 44M25 9l20 36M9 35h40" />
    </svg>
  </Squircle>,
  <Squircle key="prefs" className="bg-[#a8adb0]">
    <svg width="58" height="58" viewBox="0 0 58 58" fill="none" stroke="#454545">
      <circle cx="29" cy="29" r="24" strokeWidth="4" strokeDasharray="3 2" />
      <circle cx="29" cy="29" r="18" strokeWidth="3" />
      <circle cx="29" cy="29" r="6" strokeWidth="3" />
      <path d="M29 11v12M13 38l11-6M45 38l-11-6" strokeWidth="3" />
    </svg>
  </Squircle>,
];

const rightDock: ReactNode[] = [
  <Squircle key="chrome" className="bg-white">
    <svg width="58" height="58" viewBox="0 0 58 58">
      <circle cx="29" cy="29" r="25" fill="#e8c02c" />
      <path d="M29 4a25 25 0 0121.7 12.5H29a12.5 12.5 0 00-11.5 7.6L7.3 16.5A25 25 0 0129 4z" fill="#e0432c" />
      <path d="M7.3 16.5l10.8 18.7L29 54a25 25 0 01-21.7-37.5z" fill="#2e9a48" />
      <circle cx="29" cy="29" r="12.5" fill="#fff" />
      <circle cx="29" cy="29" r="10" fill="#3a7cec" />
    </svg>
  </Squircle>,
  <Squircle key="code" className="bg-white">
    <svg width="58" height="58" viewBox="0 0 58 58">
      <path d="M39 5l11 5v38l-11 5-21-20-8 6-5-3V22l5-3 8 6zm0 14L26 29l13 10z" fill="#1a78c8" />
      <path d="M39 5l11 5v38l-11 5z" fill="#38a0e8" />
    </svg>
  </Squircle>,
  <Squircle key="telegram" className="flex items-center justify-center bg-[#2e9cea]">
    <FaTelegramPlane className="text-white" size={38} />
  </Squircle>,
  <Squircle key="terminal" className="border-[3px] border-[#9aa] bg-black">
    <div className="m-[3px] h-[44px] rounded-[4px] bg-[#262626] p-[3px] font-['DejaVu_Sans_Mono',monospace] text-[13px] font-bold leading-[14px] text-white">
      &gt;_
    </div>
  </Squircle>,
  <Squircle key="sublime" className="bg-[#4a4a4a]">
    <svg width="58" height="58" viewBox="0 0 58 58" fill="#f4981c">
      <path d="M42 8v13L16 30V17z" />
      <path d="M16 26l26 9v13l-26 9V44l12-6-12-5z" />
    </svg>
  </Squircle>,
  <Squircle key="activity" className="border-[3px] border-[#b8c8c8] bg-black">
    <svg width="52" height="52" viewBox="0 0 52 52" fill="none">
      <path d="M6 6h40v40H6zM6 16h40M6 26h40M6 36h40M16 6v40M26 6v40M36 6v40" stroke="#183838" />
      <path d="M6 32h12l3-26 3 34 3-10h4l3-8 4 10h8" stroke="#50c8a0" />
    </svg>
  </Squircle>,
  <Squircle key="discord" className="flex items-center justify-center bg-[#6a72f4]">
    <FaDiscord className="text-white" size={40} />
  </Squircle>,
  <Squircle key="blocks" className="bg-white">
    <svg width="58" height="58" viewBox="0 0 58 58">
      <rect x="12" y="2" width="10" height="10" fill="#a8d0f8" />
      <rect x="22" y="12" width="10" height="10" fill="#68a8e8" />
      <rect x="12" y="22" width="14" height="14" fill="#1a78d8" />
      <rect x="36" y="22" width="10" height="14" fill="#e4e8ec" />
      <rect x="36" y="36" width="10" height="8" fill="#68a8e8" />
      <rect x="12" y="46" width="10" height="10" fill="#1a5a9c" />
      <rect x="24" y="46" width="10" height="10" fill="#1a5a9c" />
      <rect x="36" y="46" width="10" height="10" fill="#2a7ac8" />
    </svg>
  </Squircle>,
  <Squircle key="preview" className="bg-[#eef0f4]">
    <div className="absolute inset-[4px] bg-[linear-gradient(180deg,#9abcf0_0%,#b8d4f0_55%,#2a6ca8_75%,#c8c8c0_100%)]" />
    <div className="absolute left-[32px] top-[22px] h-[34px] w-[20px] rounded-[3px] bg-[#c4c8cc]" />
    <div className="absolute left-[36px] top-[16px] h-[14px] w-[13px] rounded-[3px] bg-[#181818]" />
  </Squircle>,
  <Squircle key="viber" className="flex items-center justify-center bg-[#6c54f0]">
    <FaViber className="text-white" size={42} />
  </Squircle>,
  <Squircle key="textedit" className="overflow-visible bg-white">
    <svg width="58" height="58" viewBox="0 0 58 58" fill="none" stroke="#c8ccd0">
      <path d="M0 10h58M0 20h58M0 30h58M0 40h58M0 50h58M10 0v58" />
      <path d="M50 0L24 58" stroke="#8aa0b0" strokeWidth="3" />
    </svg>
  </Squircle>,
];

function Dot() {
  return <div className="absolute bottom-[-16px] left-[26px] h-[8px] w-[4px] rounded-full bg-[#05001f]" />;
}

function Badge({ n }: { n: string }) {
  return <div className="absolute right-[-8px] top-[-8px] flex h-[28px] w-[28px] items-center justify-center rounded-full bg-[#f0303c] text-[15px] text-white">{n}</div>;
}

function Dock() {
  return (
    <div className="ml-[59px] mt-[4px] flex h-[94px] w-[2763px] shrink-0 items-start rounded-[24px] border-2 border-white/15 bg-[linear-gradient(90deg,#5f4f88_0%,#6a559c_30%,#7a57b8_55%,#9a55d8_72%,#8457c4_88%,#6f59b4_100%)] pl-[12px] pt-[13px] font-['Inter',sans-serif]">
      <div className="flex gap-[18.6px]">
        {leftDock.map((d, i) => (
          <div key={i} className="relative">
            {d}
            {(i === 0 || i === 6) && <Dot />}
          </div>
        ))}
      </div>
      <div className="ml-[25px] mr-[26px] mt-[-2px] h-[70px] w-[2px] bg-[#2c1a5c]" />
      <div className="flex gap-[18.6px]">
        {rightDock.map((d, i) => (
          <div key={i} className="relative">
            {d}
            {i === 2 && <Badge n="..75" />}
            {i === 9 && <Badge n="22" />}
            <Dot />
          </div>
        ))}
      </div>
      <div className="ml-[25px] mr-[21px] mt-[-2px] h-[70px] w-[2px] bg-[#2c1a5c]" />
      <div className="flex items-start">
        <div className="relative mt-[10px] grid h-[37px] w-[68px] grid-cols-3 gap-[2px] bg-[#2a2a30] p-[4px]">
          <div className="bg-[#3c3c44]" />
          <div className="bg-[#55555f]" />
          <div className="bg-[#3c3c44]" />
          <div className="absolute bottom-[-14px] left-[44px] flex h-[22px] w-[22px] items-center justify-center rounded-[5px] bg-[#6a72f4]">
            <FaDiscord className="text-white" size={16} />
          </div>
        </div>
        <div className="relative ml-[8px] mt-[10px] grid h-[37px] w-[68px] grid-cols-3 gap-[2px] bg-[#f4f4f8] p-[4px]">
          <div className="bg-[#d0d4e0]" />
          <div className="bg-[#e8a860]" />
          <div className="bg-[#70382c]" />
          <div className="absolute bottom-[-14px] left-[46px] flex h-[22px] w-[22px] items-center justify-center rounded-[5px] bg-[#6c54f0]">
            <FaViber className="text-white" size={16} />
          </div>
        </div>
        <div className="relative ml-[16px] mt-[-4px] h-[66px] w-[52px] rounded-b-[14px] bg-[linear-gradient(90deg,#c8bedc_0%,#eeeaf2_45%,#cfc6e0_100%)]">
          <div className="absolute left-[5px] right-[5px] top-[1px] h-[12px] rounded-full bg-[repeating-linear-gradient(90deg,#6a6a72_0_4px,#ddd_4px_9px)]" />
        </div>
      </div>
    </div>
  );
}

export default function App() {
  return (
    <div className="flex h-[1800px] w-[2880px] flex-col overflow-hidden bg-[linear-gradient(90deg,#0a0028_0%,#10003c_30%,#240070_63%,#5500a8_64%,#4000a0_80%,#1c0060_100%)] font-['Inter',sans-serif]">
      <MenuBar />
      <div className="flex h-[1644px] shrink-0 flex-col overflow-hidden rounded-[20px] border-b-[2px] border-r-[6px] border-t-2 border-b-black border-r-black border-t-[#6a6a6a] bg-black">
        <ChromeFrame />
        <AzureHeader />
        <Portal />
      </div>
      <Dock />
    </div>
  );
}
